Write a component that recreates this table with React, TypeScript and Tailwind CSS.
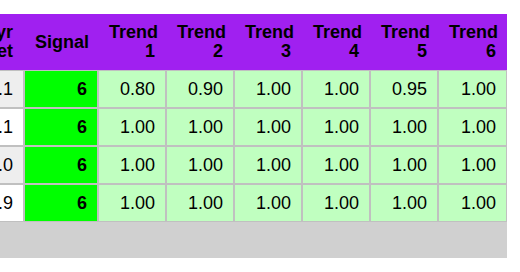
import React from "react";

type Row = {
  ret: string;
  signal: number;
  trends: string[];
};

const rows: Row[] = [
  { ret: "11.1", signal: 6, trends: ["0.80", "0.90", "1.00", "1.00", "0.95", "1.00"] },
  { ret: "12.1", signal: 6, trends: ["1.00", "1.00", "1.00", "1.00", "1.00", "1.00"] },
  { ret: "11.0", signal: 6, trends: ["1.00", "1.00", "1.00", "1.00", "1.00", "1.00"] },
  { ret: "10.9", signal: 6, trends: ["1.00", "1.00", "1.00", "1.00", "1.00", "1.00"] },
];

const trendWidths = ["w-[68px]", "w-[68px]", "w-[68px]", "w-[68px]", "w-[68px]", "w-[69px]"];

const th = "border border-[#a020f0] px-[10px] py-[8px] text-right align-middle text-[18px] leading-[19px] font-bold";
const td = "border border-[#c0c0c0] px-[10px] py-[8px] text-right align-middle text-[18px] leading-[20px]";

export default function App() {
  return (
    <div className="min-h-[272px] bg-white pt-[14px] font-['Liberation_Sans',Arial,sans-serif] text-black">
      <div className="w-[507px] overflow-hidden bg-[#d0d0d0] pb-[36px]">
        <table className="ml-[-48px] w-[555px] table-fixed border-separate border-spacing-0">
          <thead>
            <tr className="bg-[#a020f0]">
              <th className={`${th} w-[72px]`}>
                1yr
                <br />
                Ret
              </th>
              <th className={`${th} w-[74px]`}>Signal</th>
              {trendWidths.map((w, i) => (
                <th key={i} className={`${th} ${w}`}>
                  Trend
                  <br />
                  {i + 1}
                </th>
              ))}
            </tr>
          </thead>
          <tbody>
            {rows.map((r, ri) => (
              <tr key={ri}>
                <td className={`${td} ${ri % 2 === 0 ? "bg-[#eeeeee]" : "bg-white"}`}>{r.ret}</td>
                <td className={`${td} bg-[#00ff00] font-bold`}>{r.signal}</td>
                {r.trends.map((t, ti) => (
                  <td key={ti} className={`${td} bg-[#c0ffc0]`}>
                    {t}
                  </td>
                ))}
              </tr>
            ))}
          </tbody>
        </table>
      </div>
    </div>
  );
}
